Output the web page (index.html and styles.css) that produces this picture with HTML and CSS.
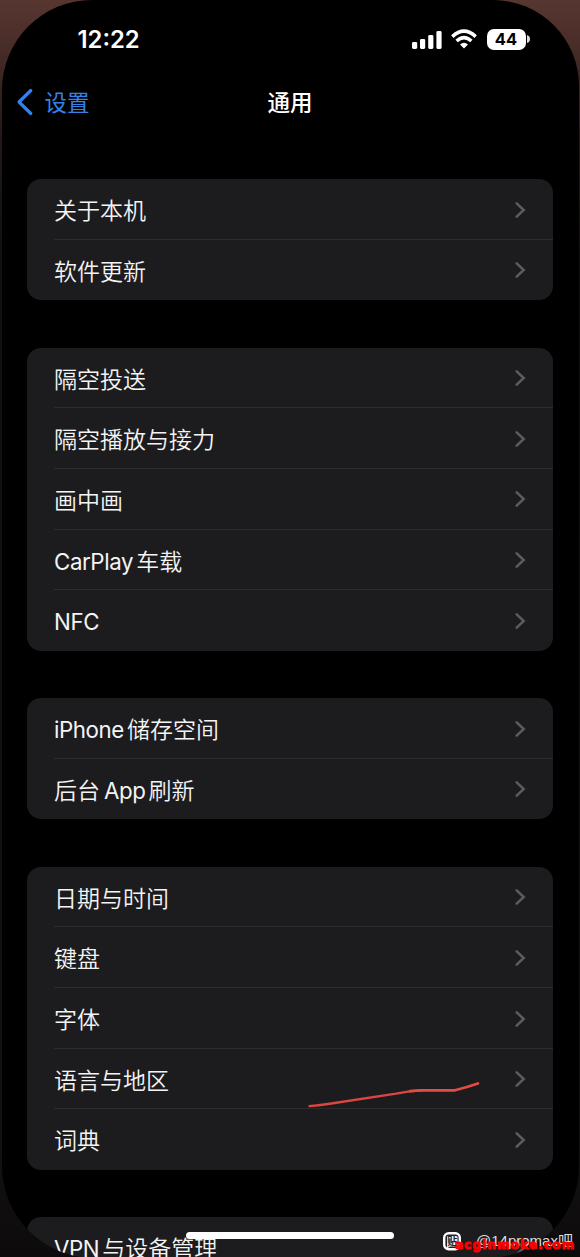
FILE: index.html
```html
<!DOCTYPE html>
<html lang="zh-CN">
<head>
<meta charset="utf-8">
<title>通用</title>
<link rel="stylesheet" href="styles.css">
</head>
<body>
<svg class="defs" width="0" height="0"><symbol id="chev" viewBox="0 0 12 18"><path d="M1.7 2.4 8.7 9 1.7 15.6" fill="none" stroke="#5c5c60" stroke-width="2.5" stroke-linecap="round" stroke-linejoin="miter"/></symbol></svg>
<div class="backdrop">
<main class="screen">
  <header class="status">
    <span class="time">12:22</span>
    <div class="indicators">
      <svg class="signal" width="30" height="19" viewBox="0 0 30 19" fill="#fff"><rect x="0" y="12" width="5.2" height="7" rx="1.4"/><rect x="8" y="9" width="5.2" height="10" rx="1.4"/><rect x="16.2" y="5" width="5.2" height="14" rx="1.4"/><rect x="24.4" y="1" width="5.2" height="18" rx="1.4"/></svg>
      <svg class="wifi" width="26" height="20" viewBox="0 0 26 20"><g fill="none" stroke="#fff" stroke-width="3.5"><path d="M1.3 7.6Q13-3.2 24.7 7.6"/><path d="M5.6 12Q13 5.2 20.4 12"/></g><path d="M9 15.4Q13 12 17 15.4L13 19.4Z" fill="#fff"/></svg>
      <span class="battery">44</span>
      <svg width="3" height="8" viewBox="0 0 3 8"><path d="M0 0Q3 1 3 4T0 8Z" fill="#ddd"/></svg>
    </div>
  </header>
  <nav class="navbar">
    <span class="back"><svg width="18" height="28" viewBox="0 0 18 28"><path d="M14.8 2.5 3 14 14.8 25.5" fill="none" stroke="#3182ee" stroke-width="3.2" stroke-linecap="round" stroke-linejoin="round"/></svg><span>设置</span></span>
    <h1>通用</h1>
  </nav>
  <div class="groups">
    <section class="group">
      <div class="row"><span>关于本机</span><svg><use href="#chev"/></svg></div>
      <div class="row"><span>软件更新</span><svg><use href="#chev"/></svg></div>
    </section>
    <section class="group">
      <div class="row"><span>隔空投送</span><svg><use href="#chev"/></svg></div>
      <div class="row"><span>隔空播放与接力</span><svg><use href="#chev"/></svg></div>
      <div class="row"><span>画中画</span><svg><use href="#chev"/></svg></div>
      <div class="row"><span><i class="before">CarPlay</i>车载</span><svg><use href="#chev"/></svg></div>
      <div class="row"><span><i>NFC</i></span><svg><use href="#chev"/></svg></div>
    </section>
    <section class="group">
      <div class="row"><span><i class="before">iPhone</i>储存空间</span><svg><use href="#chev"/></svg></div>
      <div class="row"><span>后台<i class="before after">App</i>刷新</span><svg><use href="#chev"/></svg></div>
    </section>
    <section class="group">
      <div class="row"><span>日期与时间</span><svg><use href="#chev"/></svg></div>
      <div class="row"><span>键盘</span><svg><use href="#chev"/></svg></div>
      <div class="row"><span>字体</span><svg><use href="#chev"/></svg></div>
      <div class="row"><span>语言与地区</span><svg><use href="#chev"/></svg></div>
      <div class="row"><span>词典</span><svg><use href="#chev"/></svg></div>
    </section>
    <section class="group">
      <div class="row"><span><i class="before">VPN</i>与设备管理</span><svg><use href="#chev"/></svg></div>
    </section>
  </div>
</main>
<svg class="scribble" width="176" height="30" viewBox="0 0 176 30"><path d="M3.5 26.2Q12 25.5 22 24L90 13.6Q104 10.7 116 10.4" fill="none" stroke="#db4641" stroke-width="2.3" stroke-linecap="round"/><path d="M104 11.1Q110 10.3 116 10.3L149 10.3Q160 7.5 172 3.5" fill="none" stroke="#e34b45" stroke-width="2.7" stroke-linecap="round" stroke-linejoin="round"/></svg>
<div class="home"></div>
<svg class="tieba" width="19" height="20" viewBox="0 0 19 20"><rect x="1.2" y="1.2" width="15.6" height="16" rx="4.5" fill="#222" stroke="#fff" stroke-width="2.4"/><path d="M4 4.5Q4 4 5 4H13Q14.5 4 14.5 5V14.5H7L4 16.5Z" fill="#eee"/><text x="4.2" y="13" class="glyph">贴</text></svg>
<span class="handle">@14promax吧</span>
<span class="site">acginmoke.com</span>
</div>
</body>
</html>
```
FILE: styles.css
```css
* { box-sizing: border-box; }
body { margin: 0; background: #000; font-family: Inter, "Noto Sans CJK SC", sans-serif; color: #f4f4f5; }
.defs { position: absolute; }
.backdrop {
  position: relative; width: 580px; height: 1257px; overflow: hidden;
  background: linear-gradient(#573630 0, #4b2e29 40px, #241a18 130px, #101010 260px, #121213 1150px, #0d0a0b 1257px);
}
.screen { width: 577px; height: 1258px; margin-left: 1.5px; border-radius: 90px 86px 92px 92px; background: #000; overflow: hidden; }
.status { height: 78px; display: flex; justify-content: space-between; padding: 0 49px 0 76px; align-items: center; }
.time { font-size: 23.8px; font-weight: 600; color: #fff; padding-top: 1px; }
.indicators { display: flex; align-items: center; }
.wifi { margin: 0 10px 0 9px; }
.battery { width: 39px; height: 21px; border-radius: 7px; background: #fff; color: #000; font-size: 16.5px; line-height: 21px; font-weight: 650; text-align: center; margin-right: 1px; }
.navbar { height: 48px; display: grid; grid-template-columns: 1fr auto 1fr; align-items: center; }
.back { display: flex; align-items: center; gap: 11px; padding-left: 14px; font-size: 22.5px; color: #3582e6; }
.back span, .navbar h1 { line-height: 30px; padding-top: 2px; }
.navbar h1 { margin: 0; font-size: 22.5px; font-weight: 500; color: #fff; }
.groups { padding: 53px 25.5px 0; display: grid; gap: 47.3px; }
.group { background: #1c1c1e; border-radius: 14px; overflow: hidden; }
.row { height: 60.65px; margin-left: 27px; padding: 1.5px 26px 0 0; display: flex; align-items: center; justify-content: space-between; font-size: 23px; font-weight: 350; line-height: 32px; white-space: nowrap; border-bottom: 1px solid #2d2d30; }
.row:last-child { border-bottom-color: transparent; }
.row > span { padding-top: 3px; }
.row i { font-style: normal; font-size: 22.3px; font-weight: 400; letter-spacing: -.4px; }
.row .before { margin-right: 3px; }
.row .after { margin-left: 4px; }
.row svg { width: 12px; height: 18px; }
.scribble { position: absolute; left: 306px; top: 1080px; }
.home { position: absolute; left: 186px; top: 1232px; width: 208px; height: 7px; border-radius: 4px; background: #fff; }
.tieba { position: absolute; left: 443px; top: 1232px; }
.glyph { font: 700 10px "Noto Sans CJK SC", sans-serif; fill: #222; }
.handle { position: absolute; left: 476px; top: 1231px; font: 15px/20px "Liberation Sans", "Noto Sans CJK SC", sans-serif; color: #ddd; white-space: nowrap; }
.site { position: absolute; left: 455px; top: 1237px; font: 700 12px/16px "DejaVu Sans", sans-serif; letter-spacing: 1.15px; color: #f00; -webkit-text-stroke: 1px #f00; white-space: nowrap; }
```
